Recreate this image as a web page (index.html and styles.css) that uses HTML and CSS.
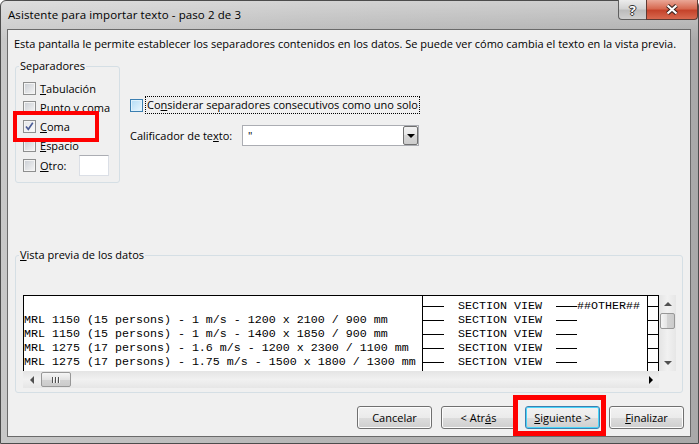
FILE: index.html
```html
<!DOCTYPE html>
<html>
<head>
  <meta charset="utf-8">
  <title>Asistente para importar texto - paso 2 de 3</title>
  <link rel="stylesheet" href="styles.css">
</head>
<body>
<div class="window">
  <div class="titlebar">
    <span class="title">Asistente para importar texto - paso 2 de 3</span>
    <div class="caption">
      <span class="cap-help">?</span>
      <span class="cap-close">
        <svg width="14" height="11" viewBox="0 0 14 11">
          <path d="M2.5 1.5 L11.5 9.5 M11.5 1.5 L2.5 9.5" stroke="#3a2420" stroke-width="4.2" fill="none"/>
          <path d="M2.5 1.5 L11.5 9.5 M11.5 1.5 L2.5 9.5" stroke="#fff" stroke-width="2.2" fill="none"/>
        </svg>
      </span>
    </div>
  </div>

  <div class="client">
    <p class="intro">Esta pantalla le permite establecer los separadores contenidos en los datos. Se puede ver cómo cambia el texto en la vista previa.</p>

    <div class="options">
      <fieldset class="group seps">
        <legend>Separadores</legend>
        <label class="row"><span class="cb"></span><span><u>T</u>abulación</span></label>
        <label class="row"><span class="cb"></span><span><u>P</u>unto y coma</span></label>
        <label class="row"><span class="cb checked">
          <svg width="11" height="11" viewBox="0 0 11 11"><path d="M2 5.5 L4.3 8.3 L8.8 1.8" stroke="#4b5c96" stroke-width="1.6" fill="none"/></svg>
        </span><span><u>C</u>oma</span></label>
        <label class="row"><span class="cb"></span><span><u>E</u>spacio</span></label>
        <label class="row other"><span class="cb"></span><span class="other-label"><u>O</u>tro:</span><span class="textbox"></span></label>
      </fieldset>

      <div class="side">
        <label class="row consec"><span class="cb hot"></span><span class="focus">Co<u>n</u>siderar separadores consecutivos como uno solo</span></label>
        <div class="qualifier">
          <span class="qualifier-label">Calificador de te<u>x</u>to:</span>
          <div class="combo">
            <span class="combo-value">"</span>
            <span class="combo-btn"><span class="arrow-down"></span></span>
          </div>
        </div>
      </div>
    </div>

    <fieldset class="group preview">
      <legend><u>V</u>ista previa de los datos</legend>
      <div class="grid-wrap">
        <div class="data">
          <div class="col col1">
            <div class="line"></div>
            <div class="line">MRL 1150 (15 persons) - 1 m/s - 1200 x 2100 / 900 mm</div>
            <div class="line">MRL 1150 (15 persons) - 1 m/s - 1400 x 1850 / 900 mm</div>
            <div class="line">MRL 1275 (17 persons) - 1.6 m/s - 1200 x 2300 / 1100 mm</div>
            <div class="line">MRL 1275 (17 persons) - 1.75 m/s - 1500 x 1800 / 1300 mm</div>
          </div>
          <div class="col col2">
            <div class="line"><span class="dash"></span>  SECTION VIEW  <span class="dash"></span>##OTHER##</div>
            <div class="line"><span class="dash"></span>  SECTION VIEW  <span class="dash"></span></div>
            <div class="line"><span class="dash"></span>  SECTION VIEW  <span class="dash"></span></div>
            <div class="line"><span class="dash"></span>  SECTION VIEW  <span class="dash"></span></div>
            <div class="line"><span class="dash"></span>  SECTION VIEW  <span class="dash"></span></div>
          </div>
          <div class="col col3">
            <div class="line"><span class="dash"></span></div>
            <div class="line"><span class="dash"></span></div>
            <div class="line"><span class="dash"></span></div>
            <div class="line"><span class="dash"></span></div>
            <div class="line"><span class="dash"></span></div>
          </div>
        </div>

        <div class="vscroll">
          <span class="sb-btn"><span class="arrow-up"></span></span>
          <span class="thumb thumb-v"></span>
          <span class="sb-btn end"><span class="arrow-down grey"></span></span>
        </div>

        <div class="hscroll">
          <span class="sb-btn"><span class="arrow-left"></span></span>
          <span class="thumb thumb-h"><span class="grip"></span></span>
          <span class="sb-btn end"><span class="arrow-right"></span></span>
        </div>

        <div class="corner"></div>
      </div>
    </fieldset>

    <div class="buttons">
      <button class="btn">Cancelar</button>
      <button class="btn">&lt; Atr<u>á</u>s</button>
      <button class="btn default"><u>S</u>iguiente &gt;</button>
      <button class="btn"><u>F</u>inalizar</button>
    </div>
  </div>

  <!-- highlight frames drawn over the dialog -->
  <div class="mark mark-coma"></div>
  <div class="mark mark-next"></div>
</div>
</body>
</html>
```

FILE: styles.css
```css
* { box-sizing: border-box; }
body { margin: 0; font-family: "Open Sans", "Noto Sans", sans-serif; font-size: 11px; color: #000; background: #fff; }
u { text-decoration: underline; text-underline-offset: 1px; }

/* window frame */
.window {
  position: relative;
  width: 699px; height: 444px;
  border: 1px solid #4c4c4c;
  border-radius: 6px 6px 0 0;
  background:
    linear-gradient(to bottom, rgba(255,255,255,.4), rgba(255,255,255,0) 40px),
    linear-gradient(to right, #c8c8c8, #b6b6b6 45%, #a9a9a9);
}
.titlebar { display: flex; align-items: flex-start; height: 28px; }
.title { padding: 6px 0 0 7px; line-height: 16px; font-size: 11.5px; letter-spacing: 0.1px; }
.caption { display: flex; margin: -1px 0 0 auto; }
.cap-help, .cap-close {
  display: flex; align-items: center; justify-content: center;
  height: 20px; border: 1px solid #5f5f5f; border-top: 0;
}
.cap-help {
  width: 28px; border-right: 0; border-radius: 0 0 0 4px;
  background: linear-gradient(#ececec, #d3d3d3 45%, #bcbcbc 55%, #cfcfcf);
  color: #fff; font-weight: 700; font-size: 13px;
  text-shadow: 1px 0 #333, -1px 0 #333, 0 1px #333, 0 -1px #333;
}
.cap-close {
  width: 52px; border-radius: 0 0 4px 0; border-color: #5e3a33;
  background: linear-gradient(#eaa797, #d76a52 45%, #c5432b 55%, #d8694f);
}

.client {
  width: 684px; height: 408px; margin-left: 6px;
  border: 1px solid #6a6a6a;
  background: #f0f0f0;
}
.intro { margin: 6px 0 0 6px; line-height: 16px; white-space: nowrap; }

/* group boxes */
.group { margin: 0; border: 1px solid #d5dfe5; border-radius: 3px; min-width: 0; }
.group legend { margin-left: -4px; padding: 0 1px; line-height: 16px; }

.options { display: flex; align-items: flex-start; margin: 6px 0 0 7px; }
.seps { width: 105px; padding: 5px 0 6px 7px; }
.row { display: flex; align-items: center; height: 19px; white-space: nowrap; }
.row.other { height: 21px; }
.other-label { width: 39px; }
.textbox { width: 30px; height: 21px; background: #fff; border: 1px solid #dbdfe6; border-top-color: #abadb3; }

/* checkboxes */
.cb {
  display: flex; align-items: center; justify-content: center;
  flex: none; width: 13px; height: 13px; margin-right: 4px;
  border: 1px solid #8e8f8f;
  background: linear-gradient(135deg, #c9cdd3, #f6f6f6);
  box-shadow: inset 0 0 0 1px #f4f4f4;
}
.cb.checked { background: linear-gradient(135deg, #e3e5e8, #fbfbfb); }
.cb.hot {
  margin-right: 2px;
  border-color: #3c7fb1;
  background: linear-gradient(135deg, #b2dcf6, #e9f6fd);
  box-shadow: inset 0 0 0 1px #e0f2fc;
}

.side { margin: 38px 0 0 10px; }
.consec { height: 18px; }
.focus { border: 1px dotted #000; padding: 0 1px; line-height: 16px; }
.qualifier { display: flex; align-items: center; margin-top: 11px; }
.qualifier-label { width: 112px; }
.combo { display: flex; width: 177px; height: 21px; border: 1px solid #abadb3; background: #fff; }
.combo-value { flex: 1; padding-left: 5px; line-height: 19px; }
.combo-btn {
  display: flex; align-items: center; justify-content: center;
  width: 15px; border: 1px solid #707070; border-radius: 2px;
  background: linear-gradient(#f2f2f2, #e6e6e6 50%, #d7d7d7 50%, #cdcdcd);
}

/* little arrow glyphs */
.arrow-down, .arrow-up { width: 0; height: 0; border-left: 4px solid transparent; border-right: 4px solid transparent; }
.arrow-down { border-top: 4px solid #000; }
.arrow-up { border-bottom: 4px solid #505050; }
.arrow-down.grey { border-top-color: #505050; }
.arrow-left, .arrow-right { width: 0; height: 0; border-top: 4px solid transparent; border-bottom: 4px solid transparent; }
.arrow-left { border-right: 4px solid #505050; }
.arrow-right { border-left: 4px solid #000; }

/* preview */
.preview { margin: 64px 7px 0; padding: 32px 6px 4px 7px; }
.grid-wrap { display: grid; grid-template-columns: 636px 17px; grid-template-rows: 76px 17px; }
.data {
  display: flex; overflow: hidden;
  border-top: 1px solid #000; border-left: 1px solid #000;
  background: #fff;
  font-family: "Liberation Mono", monospace; font-size: 11.667px;
}
.col { flex: none; padding-top: 3px; border-right: 1px solid #000; }
.col1 { width: 399px; }
.col2 { width: 225px; }
.col3 { width: 11px; }
.line { display: flex; align-items: center; height: 14px; white-space: pre; }
.dash { flex: none; width: 21px; height: 1px; background: #000; }
.col3 .dash { width: 10px; }

.vscroll, .hscroll { display: flex; align-items: center; background: #ebebeb; }
.vscroll { flex-direction: column; background: linear-gradient(to right, #e4e4e4, #f1f1f1 50%, #e6e6e6); }
.hscroll { background: linear-gradient(#e4e4e4, #f1f1f1 50%, #e6e6e6); }
.sb-btn { display: flex; align-items: center; justify-content: center; flex: none; width: 17px; height: 17px; }
.sb-btn.end { margin: auto 0 0 0; }
.hscroll .sb-btn.end { margin: 0 0 0 auto; }
.thumb { flex: none; border: 1px solid #979797; border-radius: 2px; }
.thumb-v { width: 15px; height: 16px; margin-top: 1px; background: linear-gradient(to right, #f5f5f5, #e3e3e3 50%, #d3d3d3 50%, #cbcbcb); }
.thumb-h {
  display: flex; align-items: center; justify-content: center;
  width: 30px; height: 15px; margin-left: 1px;
  background: linear-gradient(#f5f5f5, #e3e3e3 50%, #d3d3d3 50%, #cbcbcb);
}
.grip { width: 8px; height: 6px; background: repeating-linear-gradient(to right, #505050 0 1px, #f6f6f6 1px 2px, transparent 2px 3px); }
.corner { background: #f0f0f0; }

/* dialog buttons */
.buttons { display: flex; justify-content: flex-end; gap: 9px; margin: 13px 6px 0 0; }
.btn {
  width: 75px; height: 23px; padding: 0;
  border: 1px solid #707070; border-radius: 3px;
  background: linear-gradient(#f2f2f2, #ebebeb 50%, #dddddd 50%, #cfcfcf);
  box-shadow: inset 0 0 0 1px #fcfcfc;
  font: inherit; color: #000;
}
.btn.default { border-color: #3c7fb1; box-shadow: inset 0 0 0 1px #48d5f9; }

/* red highlight frames */
.mark { position: absolute; border: 4px solid #f00; }
.mark-coma { left: 12px; top: 110px; width: 86px; height: 31px; }
.mark-next { left: 512px; top: 394px; width: 93px; height: 41px; border-width: 5px; }
```
